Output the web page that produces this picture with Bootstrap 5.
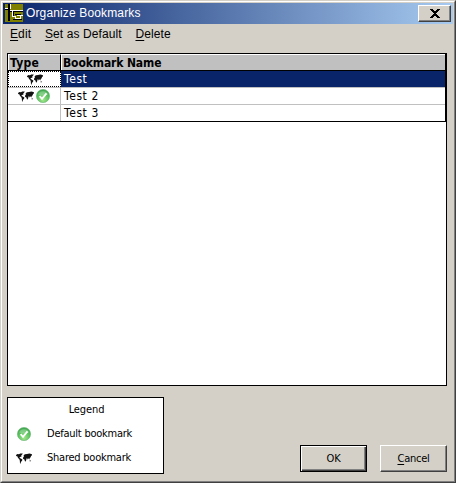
<!DOCTYPE html>
<html lang="en">
<head>
<meta charset="utf-8">
<meta name="viewport" content="width=device-width, initial-scale=1">
<title>Organize Bookmarks</title>
<link href="https://cdn.jsdelivr.net/npm/bootstrap@5.3.0/dist/css/bootstrap.min.css" rel="stylesheet">
<style>
body{margin:0;background:#d4d0c8;color:#000;overflow:hidden}
.win{width:456px;height:483px;background:#d4d0c8;border:1px solid;border-color:#d4d0c8 #404040 #404040 #d4d0c8;font:12px/16px "DejaVu Sans Condensed","DejaVu Sans",sans-serif}
.win-in{border:1px solid;border-color:#fff #808080 #808080 #fff;padding:1px}
.titlebar{height:21px;background:linear-gradient(90deg,#0a246a,#a6caf0);color:#fff;font:12px/21px "Liberation Sans",Arial,sans-serif;padding:0 2px 0 0}
.titlebar .cap{margin-left:3px;letter-spacing:.14px}
.xbtn{width:33px;height:17px;padding:0;border:1px solid;border-color:#fff #404040 #404040 #fff;background:#d4d0c8;box-shadow:inset -1px -1px #808080;border-radius:0;margin-top:2px}
.menu{height:29px;font:12px/21px "Liberation Sans",Arial,sans-serif;padding-left:7px;gap:13.8px;letter-spacing:.1px}
.menu a{color:#000;text-decoration:none}
u{text-decoration:underline;text-underline-offset:2px;text-decoration-thickness:1px}
.pane{width:440px;height:333px;margin-left:4px;background:#fff;border:1px solid #000}
.rows{border-right:1px solid #000;border-bottom:1px solid #000}
.hd{height:17px;background:#c0c0c0;border-bottom:1px solid #000;font-weight:700;line-height:16px}
.hd>div{border-top:1px solid #fff;border-left:1px solid #fff}
.hd .c1{border-right:1px solid #000;padding-left:1px;letter-spacing:.3px}
.hd .c2{padding-left:1px;letter-spacing:-.12px}
.c1{width:53px;flex:none}
.c2{flex:1;padding-left:3px;letter-spacing:.6px}
.rw{height:17px;border-bottom:1px solid #c0c0c0}
.rw:last-child{height:16px;border-bottom:0}
.rw .c1{border-right:1px solid #c0c0c0}
.rw.sel .c1{border:1px dotted #000}
.rw.sel .c2{background:#0a246a;color:#fff}
.rw .c2{line-height:17px}
.pair{gap:2px}
.foot{padding:11px 6px 0 4px}
.legend{width:157px;height:77px;background:#fff;border:1px solid #000;font-size:11px;line-height:24px;letter-spacing:-.24px}
.legend .ttl{height:24px;letter-spacing:-.1px;padding-left:2px}
.legend .ic{width:18px;margin-left:7px;margin-right:14px}
.btns{gap:13px;padding-top:48px}
.dbtn{width:67px;height:27px;padding:0;border-radius:0;background:#d4d0c8;color:#000;font-size:11px;line-height:23px;letter-spacing:-.25px;border:1px solid;border-color:#fff #404040 #404040 #fff;box-shadow:inset -1px -1px #808080}
.dbtn.def{border-color:#000;box-shadow:inset 1px 1px #fff,inset -1px -1px #404040,inset -2px -2px #808080}
svg{display:block;flex:none}
</style>
</head>
<body>
<svg width="0" height="0" class="position-absolute">
<defs>
<radialGradient id="gr" cx=".5" cy=".8" r=".8"><stop offset="0" stop-color="#a0e58a"/><stop offset=".6" stop-color="#58c05c"/><stop offset="1" stop-color="#3ca24c"/></radialGradient>
<symbol id="map" viewBox="0 0 16 11">
<path fill="#111" d="M0 2 1.5 1 3 1.2 4.2.4 6.8.6 6 1.8 5.3 2.3 5.5 3.6 4 4 3.4 4.9 4.3 5.3 5.6 5.9 6.5 6.8 5.8 8.1 4.9 9 4.6 10.8 4 10.2 3.8 7.5 3.2 6 2 4.9 1.5 3.4.2 3Z"/>
<path fill="#111" d="M7.6 2.2 9 1.2 11 1.1 13.5.5 16 1.3 15.7 2.8 15 2.9 14.7 4.3 13.7 4.9 13.4 6.4 12.5 5.3 11.8 6.4 11 5.1 10.5 5.8 10 7.8 9.1 8.8 8.4 6.5 7 5.7 7.3 4 8 3.5Z"/>
<path fill="#777" d="M13.4 7.4 14.5 7 15.2 7.9 14.4 8.4 13.4 8.2Z"/>
</symbol>
<symbol id="ok" viewBox="0 0 14 14">
<circle cx="7" cy="7" r="6.6" fill="url(#gr)" stroke="#68b374" stroke-width=".6"/>
<path d="M2 5.6a5.2 4.6 0 0 1 10 0Q7 7.3 2 5.6Z" fill="#fff" opacity=".25"/>
<path d="M3.6 7.2 6 9.8 10.5 4.4" fill="none" stroke="#fff" stroke-width="1.8"/>
</symbol>
</defs>
</svg>
<div class="win"><div class="win-in h-100">
<div class="titlebar d-flex align-items-start">
<svg width="20" height="21" viewBox="0 0 20 21" shape-rendering="crispEdges"><path fill="#808000" d="M2 1h18v18H2z"/><path fill="#000" d="M2 6h5v1H2zM5 1h2v17H5zM7 8h13v1H7zM10 8h1v5h-1zM12 11h6v1h-6zM10 16h9v1h-9z"/><path fill="#fff" d="M2 5h3v1H2zM7 1h1v5H7zM7 7h13v1H7zM9 8h1v6H9zM9 13h4v1H9zM12 14h1v1h-1zM12 15h6v1h-6zM17 12h1v3h-1zM14 12h6v1h-6z"/></svg>
<span class="cap">Organize Bookmarks</span>
<button class="xbtn btn ms-auto d-flex align-items-center justify-content-center" aria-label="Close"><svg width="10" height="9" viewBox="0 0 10 9" shape-rendering="crispEdges"><path d="M0 0h3v1h1v1h2V1h1V0h3v1H9v1H8v1H7v1H6v1h1v1h1v1h1v1h1v1H7V8H6V7H4v1H3v1H0V8h1V7h1V6h1V5h1V4H3V3H2V2H1V1H0z"/></svg></button>
</div>
<nav class="menu d-flex"><a href="#"><u>E</u>dit</a><a href="#"><u>S</u>et as Default</a><a href="#"><u>D</u>elete</a></nav>
<div class="pane"><div class="rows">
<div class="hd d-flex"><div class="c1">Type</div><div class="c2">Bookmark Name</div></div>
<div class="rw sel d-flex"><div class="c1 d-flex align-items-center justify-content-center"><svg width="16" height="11"><use href="#map"/></svg></div><div class="c2">Test</div></div>
<div class="rw d-flex"><div class="c1 pair d-flex align-items-center justify-content-center"><svg width="16" height="11"><use href="#map"/></svg><svg width="14" height="14"><use href="#ok"/></svg></div><div class="c2">Test 2</div></div>
<div class="rw d-flex"><div class="c1"></div><div class="c2">Test 3</div></div>
</div></div>
<div class="foot d-flex align-items-start">
<div class="legend"><div class="ttl text-center">Legend</div>
<div class="d-flex align-items-center"><div class="ic d-flex justify-content-center"><svg width="14" height="14"><use href="#ok"/></svg></div>Default bookmark</div>
<div class="d-flex align-items-center"><div class="ic d-flex justify-content-center"><svg width="16" height="11"><use href="#map"/></svg></div>Shared bookmark</div></div>
<div class="ms-auto d-flex btns"><button class="btn dbtn def">OK</button><button class="btn dbtn"><u>C</u>ancel</button></div>
</div>
</div></div>
<script src="https://cdn.jsdelivr.net/npm/bootstrap@5.3.0/dist/js/bootstrap.bundle.min.js"></script>
</body>
</html>
